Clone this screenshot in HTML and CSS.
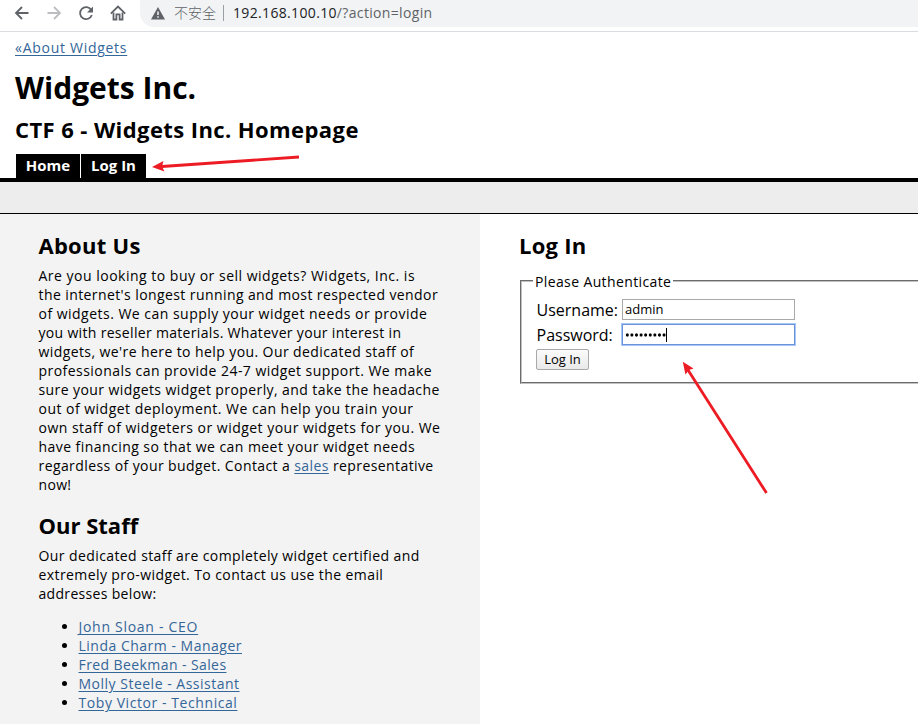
FILE: index.html
```html
<!DOCTYPE html>
<html lang="en">
<head>
<meta charset="utf-8">
<title>Widgets Inc.</title>
<link rel="stylesheet" href="styles.css">
</head>
<body>
<div class="toolbar">
  <svg class="nav-icons" width="140" height="31" viewBox="0 0 140 31" fill="none" stroke="#5f6368" stroke-width="1.8">
    <path d="M28.5 13H16.2M22 7l-6 6 6 6"/>
    <path stroke="#bcbec1" d="M47.5 13H60M54 7l6 6-6 6"/>
    <path d="M91.2 10a6 6 0 1 0 .6 5"/>
    <path fill="#5f6368" stroke="none" d="M93 6.500v6h-6z"/>
    <path d="M113.500 12.500v7h2.900v-5.200h3.200v5.200h2.900v-7"/>
    <path d="M110.800 13.600 118 6.600l7.200 7"/>
  </svg>
  <div class="omnibox">
    <svg width="14" height="13" viewBox="0 0 14 13"><path fill="#5f6368" d="M7 0 14 12.500H0z"/><path fill="#fff" d="M6.300 4.500h1.400v3.600H6.300zM6.300 9.200h1.400v1.500H6.300z"/></svg>
    <span class="warn">不安全</span>
    <span class="sep"></span>
    <span class="url"><b>192.168.100.10</b>/?action=login</span>
  </div>
</div>
<header>
  <a class="back" href="#">«About Widgets</a>
  <h1>Widgets Inc.</h1>
  <h2 class="tagline">CTF 6 - Widgets Inc. Homepage</h2>
  <nav><a class="home" href="#">Home</a><a class="login" href="#">Log In</a></nav>
</header>
<div class="band"></div>
<main>
  <section class="about">
    <h2 class="loose">About Us</h2>
    <p><span class="t4">Are you looking to buy or sell widgets? Widgets, Inc. is</span><br>
    <span class="t1">the internet's longest running and most respected vendor</span><br>
    <span class="t3">of widgets. We can supply your widget needs or provide</span><br>
    you with reseller materials. Whatever your interest in<br>
    <span class="t1">widgets, we're here to help you. Our dedicated staff of</span><br>
    <span class="t2">professionals can provide 24-7 widget support. We make</span><br>
    <span class="t1">sure your widgets widget properly, and take the headache</span><br>
    <span class="t3">out of widget deployment. We can help you train your</span><br>
    <span class="t3">own staff of widgeters or widget your widgets for you. We</span><br>
    <span class="t2">have financing so that we can meet your widget needs</span><br>
    <span class="t1">regardless of your budget. Contact a <a href="#">sales</a> representative</span><br>
    now!</p>
    <h2 class="staff">Our Staff</h2>
    <p><span class="t1">Our dedicated staff are completely widget certified and</span><br>
    <span class="t1">extremely pro-widget. To contact us use the email</span><br>
    addresses below:</p>
    <ul>
      <li><a class="t6" href="#">John Sloan - CEO</a></li>
      <li><a class="t4" href="#">Linda Charm - Manager</a></li>
      <li><a class="t1" href="#">Fred Beekman - Sales</a></li>
      <li><a class="t4" href="#">Molly Steele - Assistant</a></li>
      <li><a class="t5" href="#">Toby Victor - Technical</a></li>
    </ul>
  </section>
  <section class="auth">
    <h2 class="loose">Log In</h2>
    <div class="fieldset">
      <div class="legend">Please Authenticate</div>
      <div class="row"><span class="label">Username:</span><div class="input">admin</div></div>
      <div class="row"><span class="label">Password:</span><div class="input focus"><span class="dots"></span><i class="caret"></i></div></div>
      <div class="button">Log In</div>
    </div>
  </section>
</main>
<svg class="arrows" width="918" height="724" viewBox="0 0 918 724" fill="#ed1c24" stroke="#ed1c24">
  <path stroke-width="2.800" d="M299 157 162 166.500M766.500 493 688 370"/>
  <path stroke="none" d="M152 167 163.500 161 162 166.500 164.500 171.500zM682.800 361.800 693.500 368.500 689 370 685.400 374.500z"/>
</svg>
</body>
</html>
```
FILE: styles.css
```css
* { box-sizing: border-box; }
body { margin: 0; width: 918px; height: 724px; overflow: hidden; background: #fff; color: #000;
  font-family: "Open Sans", "Noto Sans", "Noto Sans CJK SC", sans-serif; font-size: 14px; line-height: 19px; }
a { color: #369; text-decoration: underline; text-underline-offset: 2px; text-decoration-thickness: 1px; }
h1, h2, p, ul { margin: 0; }
.toolbar { height: 32px; border-bottom: 1px solid #dadce0; display: flex; }
.nav-icons { flex: none; }
.omnibox { flex: 1; height: 27px; background: #f1f3f4; border-radius: 0 0 0 14px; display: flex; align-items: center; padding: 0 0 1px 11px; color: #5f6368; }
.warn { font-family: "Noto Sans CJK SC", sans-serif; font-size: 14px; font-weight: 300; margin: -2px 0 0 9px; width: 43px; white-space: nowrap; }
.sep { width: 1px; height: 16px; background: #9aa0a6; margin: 0 9px 0 6px; }
.url { letter-spacing: .34px; white-space: nowrap; margin-top: -1px; }
.url b { font-weight: 400; color: #202124; }
header { height: 150px; padding: 6px 0 0 15px; border-bottom: 4px solid #000; }
.back { display: block; width: max-content; height: 20px; letter-spacing: .72px; }
h1 { font-size: 30px; line-height: 40px; margin-top: 10px; height: 41px; }
h2 { font-size: 22px; line-height: 30px; white-space: nowrap; }
.tagline { margin-top: 5px; height: 30px; letter-spacing: .41px; }
nav { display: flex; gap: 1px; margin: 10px 0 0 1px; }
nav a { height: 24px; line-height: 23px; background: #000; color: #fff; font-weight: 700; font-size: 15px; text-decoration: none; text-align: center; white-space: nowrap; }
.home { width: 64px; }
.login { width: 65px; }
.band { height: 32px; background: #ededed; border-bottom: 1px solid #000; }
main { display: flex; height: 510px; }
.about { width: 480px; background: #f3f3f3; padding: 16px 0 0 38.500px; letter-spacing: .32px; }
.about p { white-space: nowrap; padding-top: 6px; }
.t1 { letter-spacing: .41px; }
.t2 { letter-spacing: .45px; }
.t3 { letter-spacing: .48px; }
.t4 { letter-spacing: .5px; }
.t5 { letter-spacing: .57px; }
.t6 { letter-spacing: .71px; }
.staff { margin-top: 16px; }
.loose { letter-spacing: .26px; }
.staff { letter-spacing: 0; }
ul { padding: 0 0 0 40px; margin-top: 14px; }
.auth { flex: 1; padding: 16px 0 0 39px; }
.fieldset { margin: 20px -8px 0 1px; height: 104px; border: 2px groove #c0c0c0; padding: 0 0 0 14px; }
.legend { width: 140px; height: 19px; margin: -10px 0 0 -3px; padding-left: 2px; background: #fff; letter-spacing: .38px; white-space: nowrap; }
.row { display: flex; height: 25px; align-items: center; }
.legend + .row { margin-top: 6px; }
.label { width: 86px; padding-left: 0.500px; font-size: 16px; line-height: 22px; }
.input { width: 173px; height: 21px; border: 1px solid #a9a9a9; background: #fff; padding-left: 2px; font-size: 13px; line-height: 19px; display: flex; align-items: center; }
.focus { border-color: #6b93da; box-shadow: 0 0 0 1px #a8c7f8; }
.dots { width: 41px; height: 4px; background: radial-gradient(circle, #000 1.300px, transparent 1.900px) 0 0 / 4.600px 4px; }
.caret { width: 1px; height: 14px; background: #000; }
.button { width: 53px; height: 21px; margin-top: 2px; border: 1px solid #a9a9a9; border-radius: 2px; background: linear-gradient(#fbfbfb, #e9e9e9); font-size: 13px; line-height: 19px; text-align: center; }
.arrows { position: absolute; left: 0; top: 0; pointer-events: none; }
```
